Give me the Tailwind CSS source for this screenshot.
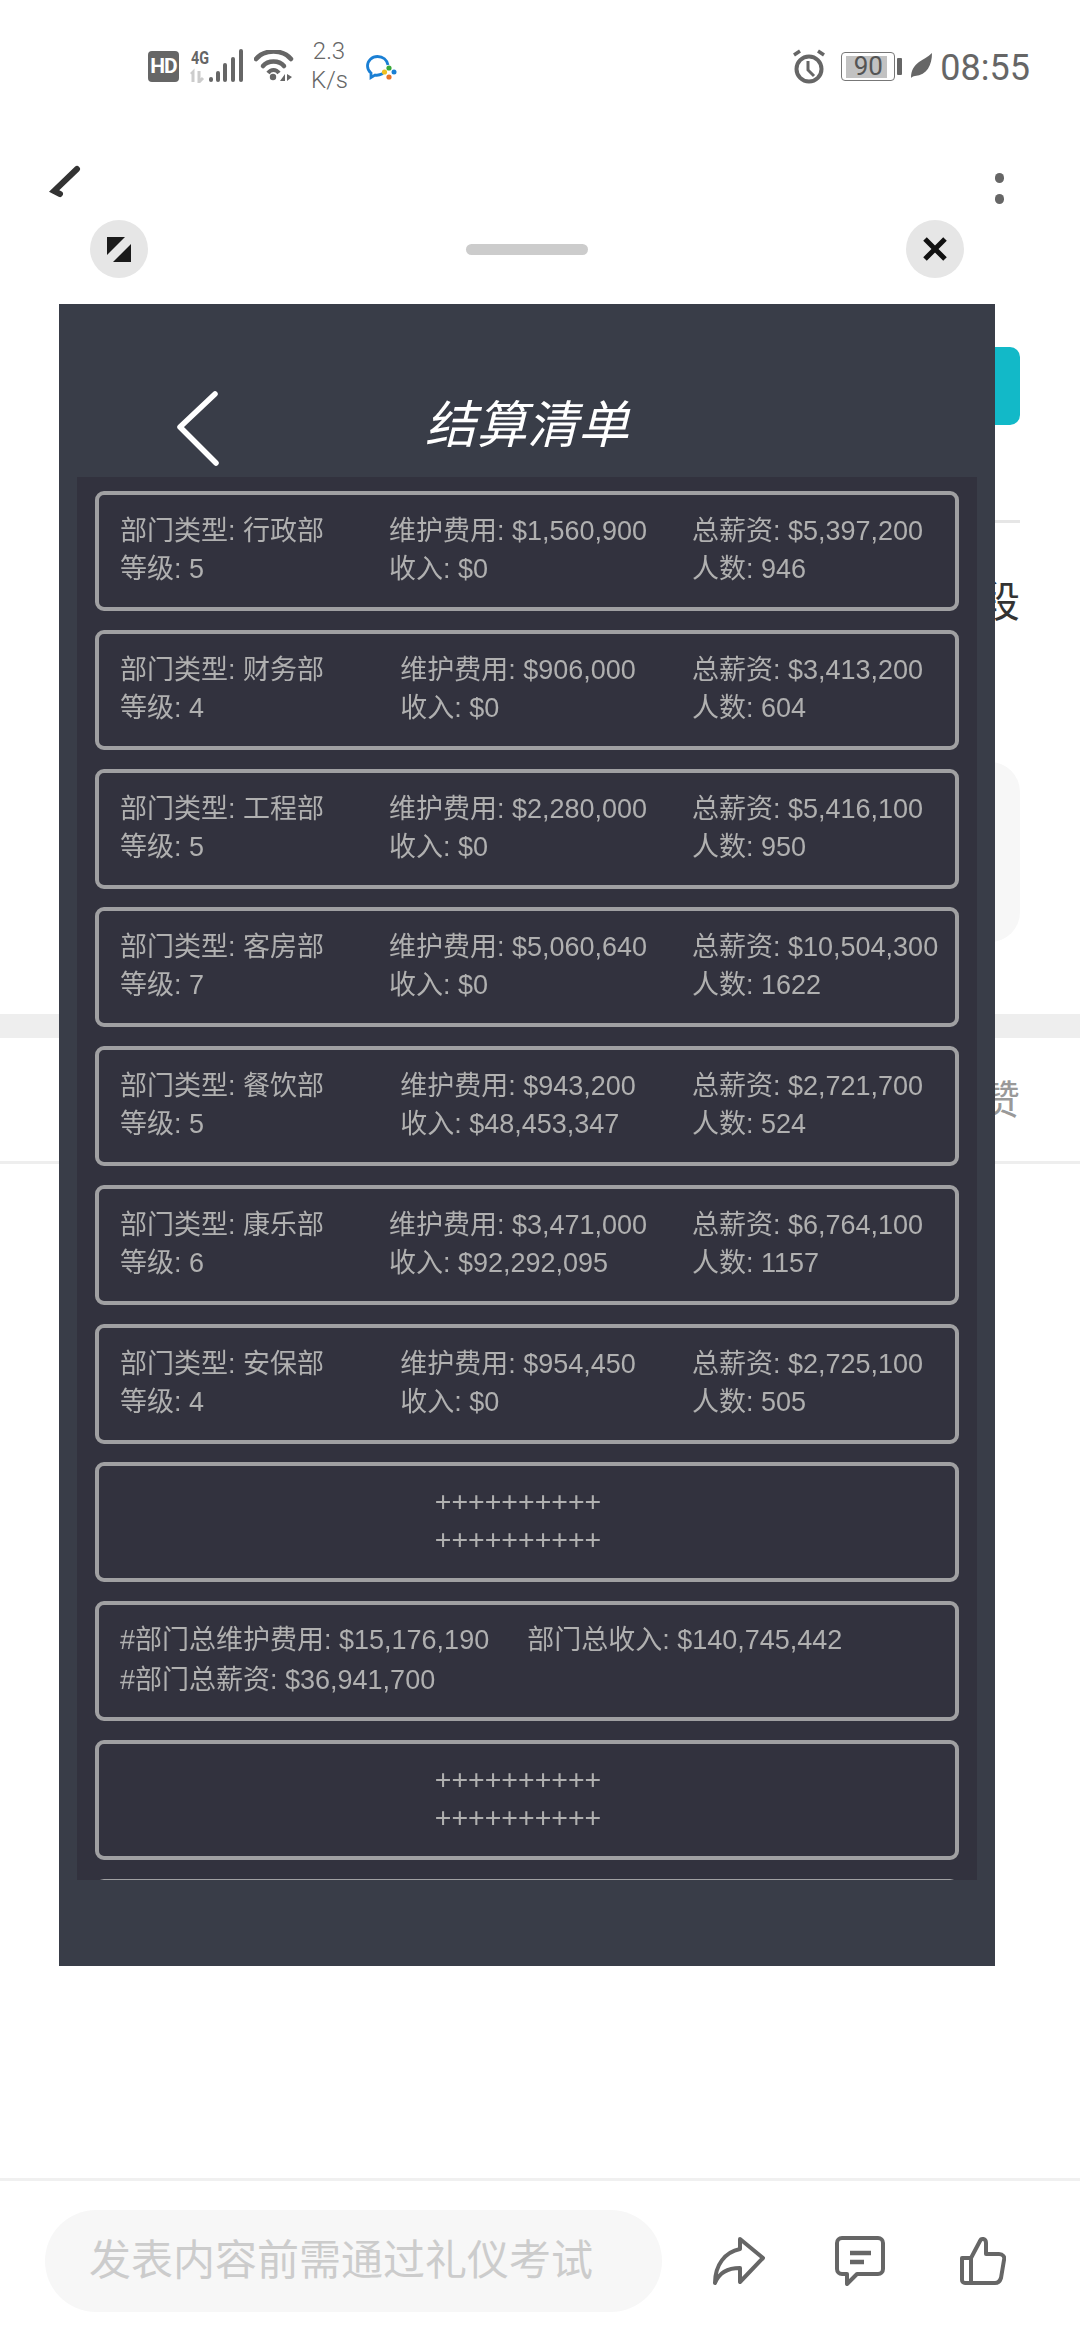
<!DOCTYPE html>
<html><head><meta charset="utf-8"><script src="https://cdn.jsdelivr.net/npm/@tailwindcss/browser@4"></script></head>
<body class="m-0">
<div class="relative w-[1080px] h-[2340px] bg-white overflow-hidden font-['Liberation_Sans','Noto_Sans_CJK_SC',sans-serif]">
  <!-- status bar -->
  <div class="flex justify-between items-start h-[130px] pl-[148px] pr-[50px] pt-[40px] text-[#666]">
    <div class="flex items-start">
      <div class="mt-[11px] w-[31px] h-[31px] rounded-[4px] bg-[#666] text-white text-[21px] leading-[31px] font-bold text-center font-['Roboto',sans-serif] tracking-[-1px]">HD</div>
      <svg class="mt-[5px] ml-[11px]" width="55" height="38" viewBox="0 -4 55 38">
        <text x="1" y="15" font-family="Roboto" font-weight="700" font-size="19" fill="#666" textLength="18" lengthAdjust="spacingAndGlyphs">4G</text>
        <path d="M3 33V23L1 25M9 22V33L13 29" stroke="#ccc" stroke-width="3" fill="none"/>
        <rect x="19" y="28" width="4" height="5" rx="2" fill="#666"/><rect x="26" y="22" width="4" height="11" rx="2" fill="#666"/><rect x="33" y="14" width="4" height="19" rx="2" fill="#666"/><rect x="41" y="8" width="4" height="25" rx="2" fill="#666"/><rect x="49" y="0" width="4" height="33" rx="2" fill="#666"/>
      </svg>
      <svg class="mt-[10px] ml-[9px]" width="40" height="33" viewBox="0 0 40 33" fill="none">
        <path d="M2 9C10 -1 29 -1 37 9" stroke="#666" stroke-width="4.5" stroke-linecap="round"/>
        <path d="M9 16C14 10 25 10 30 16" stroke="#666" stroke-width="4.5" stroke-linecap="round"/>
        <path d="M14 23C17 19 22 19 25 23" stroke="#666" stroke-width="4"/>
        <circle cx="19" cy="27" r="3.2" fill="#666"/>
        <path d="M31 31V24l-5 7zM33 24v7l5-4z" fill="#666"/>
      </svg>
      <div class="ml-[17px] mt-[-3px] w-[36px] text-[24px] leading-[29px] text-center font-light font-['Roboto',sans-serif] whitespace-nowrap"><div>2.3</div><div>K/s</div></div>
      <svg class="mt-[15px] ml-[19px]" width="31" height="26" viewBox="0 0 31 26" fill="none">
        <path d="M17 18.5C14 20 10 20.5 9 20L5 22.5V18C2.5 16 1.5 13.5 1.5 11C1.5 5.500 6 1.500 11.500 1.500C17 1.500 21 5 22 10" stroke="#1a7fd4" stroke-width="2.800"/>
        <circle cx="23" cy="13" r="2.600" fill="#3aa83a"/><circle cx="18.500" cy="17" r="2.600" fill="#f0c020"/><circle cx="28" cy="17" r="2.500" fill="#1a7fd4"/><circle cx="23" cy="22" r="2.600" fill="#e8742a"/>
      </svg>
    </div>
    <div class="flex items-start">
      <svg class="mt-[9px]" width="34" height="35" viewBox="0 0 34 35" fill="none" stroke="#666">
        <circle cx="17" cy="20" r="12.500" stroke-width="4"/><path d="M16 12v9l6 6" stroke-width="3"/><path d="M2 6l6-4M32 6l-6-4" stroke-width="3.500"/>
      </svg>
      <div class="relative mt-[12px] ml-[15px] w-[54px] h-[29px] rounded-[4px] border-[1.5px] border-[#777] p-[2.5px]">
        <div class="w-[41px] h-full ml-[1px] bg-[#c2c2c2]"></div>
        <div class="absolute inset-0 text-center text-[26px] leading-[26px] text-[#555] font-['Roboto',sans-serif]">90</div>
      </div>
      <div class="mt-[18px] ml-[2px] w-[5px] h-[17px] bg-[#666] rounded-[1px]"></div>
      <svg class="mt-[13px] ml-[7px]" width="24" height="25" viewBox="0 0 24 25"><path d="M23 0C23 12 18 22 6 23c-2 0-3 1-4 2 0-8 3-12 8-16 4-3 9-5 13-9z" fill="#666"/></svg>
      <div class="ml-[7px] mt-[6px] text-[36px] leading-[44px] font-['Roboto',sans-serif]">08:55</div>
    </div>
  </div>
  <!-- nav bar -->
  <div class="flex justify-between items-start h-[80px] pl-[49px] pr-[76px] pt-[35px]">
    <svg width="32" height="34" viewBox="0 0 32 34" fill="none" stroke="#333" stroke-width="6" stroke-linecap="round"><path d="M28 4L5 26l6 3"/></svg>
    <div class="flex flex-col gap-[11px] pt-[8px] ml-[20px]"><div class="w-[9px] h-[10px] rounded-full bg-[#666]"></div><div class="w-[9px] h-[10px] rounded-full bg-[#666]"></div></div>
  </div>
  <!-- page content behind sheet -->
  <div class="ml-auto mt-[137px] mr-[60px] w-[120px] h-[78px] rounded-[10px] bg-[#12b9c8]"></div>
  <div class="mt-[95px] mx-[60px] h-[3px] bg-[#e6e6e6]"></div>
  <div class="mt-[55px] mr-[60px] text-right text-[42px] leading-[50px] text-[#333]">段</div>
  <div class="mt-[134px] mx-[60px] h-[180px] rounded-[30px] bg-[#f7f7f7]"></div>
  <div class="mt-[72px] h-[24px] bg-[#eeeeee]"></div>
  <div class="h-[123px] pr-[60px] flex items-center justify-end text-[40px] text-[#999]">赞</div>
  <div class="h-[3px] bg-[#eeeeee]"></div>
  <!-- bottom bar -->
  <div class="absolute bottom-0 inset-x-0 h-[162px] border-t-[3px] border-[#f0f0f0] flex items-start pl-[45px] pt-[29px]">
    <div class="w-[617px] h-[102px] rounded-[51px] bg-[#f7f7f7] pl-[44px] text-[42px] leading-[102px] text-[#cccccc]">发表内容前需通过礼仪考试</div>
    <svg class="mt-[27px] ml-[51px]" width="52" height="48" viewBox="0 0 52 48" fill="none" stroke="#666" stroke-width="4" stroke-linejoin="round">
      <path d="M27 2L50 21 27 45V31C15 31 6 36 2 46 2 28 12 15 27 12z"/>
    </svg>
    <svg class="mt-[26px] ml-[70px]" width="50" height="50" viewBox="0 0 50 50" fill="none" stroke="#666" stroke-width="4" stroke-linejoin="round">
      <path d="M7 2H43a5 5 0 0 1 5 5V33a5 5 0 0 1-5 5H22L12 48V38H7a5 5 0 0 1-5-5V7a5 5 0 0 1 5-5z"/>
      <path d="M15 17H36M15 26H29" stroke-width="4.500"/>
    </svg>
    <svg class="mt-[26px] ml-[75px]" width="46" height="50" viewBox="0 0 46 50" fill="none" stroke="#666" stroke-width="4" stroke-linejoin="round">
      <path d="M2 22H11V47H5a3 3 0 0 1-3-3zM11 22L20 5c1-3 6-3 6 2V18H39c4 0 6 3 5 6L41 42c-1 3-3 5-6 5H11"/>
    </svg>
  </div>
  <!-- sheet overlay controls -->
  <div class="absolute left-[90px] top-[220px] w-[58px] h-[58px] rounded-full bg-[#e6e6e6] flex items-center justify-center">
    <svg width="26" height="26" viewBox="0 0 26 26" fill="#1a1a1a"><path d="M1 1H19L1 19zM25 8V26H7z"/></svg>
  </div>
  <div class="absolute left-[466px] top-[244px] w-[122px] h-[11px] rounded-full bg-[#cccccc]"></div>
  <div class="absolute left-[906px] top-[220px] w-[58px] h-[58px] rounded-full bg-[#e6e6e6] flex items-center justify-center">
    <svg width="26" height="26" viewBox="0 0 26 26" fill="none" stroke="#111" stroke-width="5"><path d="M3 3L23 23M23 3L3 23"/></svg>
  </div>
  <!-- dark panel -->
  <div class="absolute left-[59px] top-[304px] w-[936px] h-[1662px] bg-[#393d48] flex flex-col items-center">
    <div class="relative w-full h-[173px] flex-none blur-[0.4px]">
      <svg class="absolute left-[116px] top-[86px]" width="48" height="78" viewBox="0 0 48 78" fill="none" stroke="#fff" stroke-width="5.500" stroke-linecap="round" stroke-linejoin="round"><path d="M40 4L5 37 41 73"/></svg>
      <div class="absolute inset-x-0 top-[87px] text-center text-[51px] leading-[70px] italic text-white">结算清单</div>
    </div>
    <div class="w-[900px] h-[1403px] flex-none bg-[#32323e] overflow-hidden">
      <div class="pt-[14px] px-[18px] flex flex-col gap-[18.75px] text-[27px] leading-[38px] text-[#b0b0b0] blur-[0.6px]">
      <div class="flex-none h-[120px] rounded-[9px] border-[4px] border-[#a0a0a2] pl-[21px] pt-[17px] grid grid-cols-[224px_348px_1fr]"><div>部门类型: 行政部<br>等级: 5</div><div class="justify-self-center">维护费用: $1,560,900<br>收入: $0</div><div>总薪资: $5,397,200<br>人数: 946</div></div>
      <div class="flex-none h-[120px] rounded-[9px] border-[4px] border-[#a0a0a2] pl-[21px] pt-[17px] grid grid-cols-[224px_348px_1fr]"><div>部门类型: 财务部<br>等级: 4</div><div class="justify-self-center">维护费用: $906,000<br>收入: $0</div><div>总薪资: $3,413,200<br>人数: 604</div></div>
      <div class="flex-none h-[120px] rounded-[9px] border-[4px] border-[#a0a0a2] pl-[21px] pt-[17px] grid grid-cols-[224px_348px_1fr]"><div>部门类型: 工程部<br>等级: 5</div><div class="justify-self-center">维护费用: $2,280,000<br>收入: $0</div><div>总薪资: $5,416,100<br>人数: 950</div></div>
      <div class="flex-none h-[120px] rounded-[9px] border-[4px] border-[#a0a0a2] pl-[21px] pt-[17px] grid grid-cols-[224px_348px_1fr]"><div>部门类型: 客房部<br>等级: 7</div><div class="justify-self-center">维护费用: $5,060,640<br>收入: $0</div><div>总薪资: $10,504,300<br>人数: 1622</div></div>
      <div class="flex-none h-[120px] rounded-[9px] border-[4px] border-[#a0a0a2] pl-[21px] pt-[17px] grid grid-cols-[224px_348px_1fr]"><div>部门类型: 餐饮部<br>等级: 5</div><div class="justify-self-center">维护费用: $943,200<br>收入: $48,453,347</div><div>总薪资: $2,721,700<br>人数: 524</div></div>
      <div class="flex-none h-[120px] rounded-[9px] border-[4px] border-[#a0a0a2] pl-[21px] pt-[17px] grid grid-cols-[224px_348px_1fr]"><div>部门类型: 康乐部<br>等级: 6</div><div class="justify-self-center">维护费用: $3,471,000<br>收入: $92,292,095</div><div>总薪资: $6,764,100<br>人数: 1157</div></div>
      <div class="flex-none h-[120px] rounded-[9px] border-[4px] border-[#a0a0a2] pl-[21px] pt-[17px] grid grid-cols-[224px_348px_1fr]"><div>部门类型: 安保部<br>等级: 4</div><div class="justify-self-center">维护费用: $954,450<br>收入: $0</div><div>总薪资: $2,725,100<br>人数: 505</div></div>
      <div class="flex-none h-[120px] rounded-[9px] border-[4px] border-[#a0a0a2] pt-[16px] pr-[18px] text-center text-[28.500px]">++++++++++<br>++++++++++</div>
      <div class="flex-none h-[120px] rounded-[9px] border-[4px] border-[#a0a0a2] pl-[21px] pt-[15px] leading-[40px]"><div class="flex gap-[38px]"><span>#部门总维护费用: $15,176,190</span><span>部门总收入: $140,745,442</span></div><div>#部门总薪资: $36,941,700</div></div>
      <div class="flex-none h-[120px] rounded-[9px] border-[4px] border-[#a0a0a2] pt-[16px] pr-[18px] text-center text-[28.500px]">++++++++++<br>++++++++++</div>
      <div class="flex-none h-[120px] rounded-[9px] border-[4px] border-[#a0a0a2]"></div>
      </div>
    </div>
  </div>
</div>
</body></html>
